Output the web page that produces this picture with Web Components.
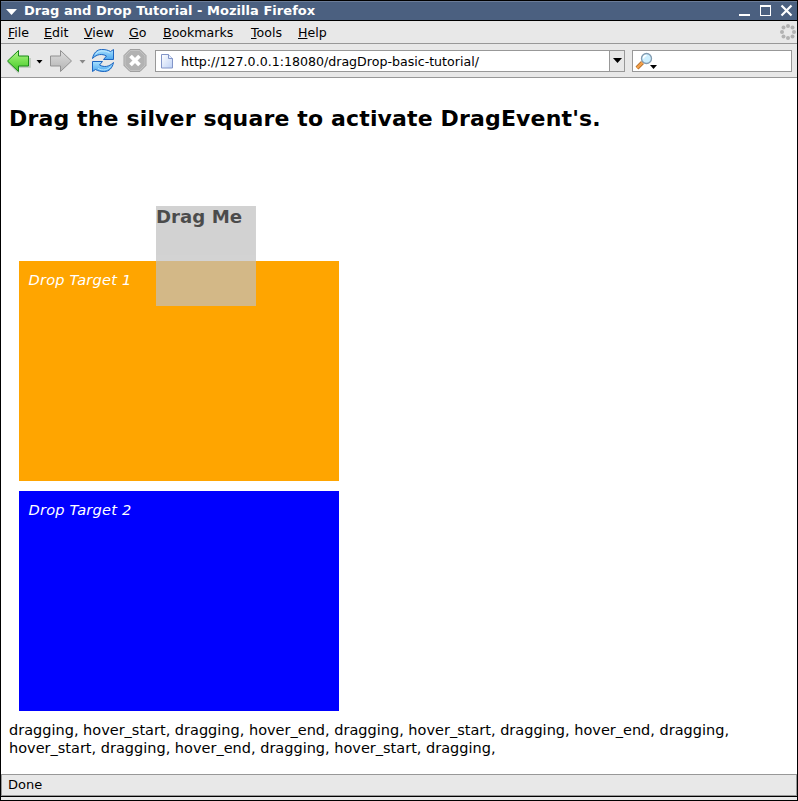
<!DOCTYPE html>
<html lang="en">
<head>
<meta charset="utf-8">
<title>Drag and Drop Tutorial</title>
<style>
html,body{margin:0;height:100%;overflow:hidden;background:#000}
body{font-family:"DejaVu Sans",sans-serif;font-size:13px;color:#000}
</style>
</head>
<body>
<browser-window>
  <title-bar slot="chrome">Drag and Drop Tutorial - Mozilla Firefox</title-bar>
  <menu-bar slot="chrome"></menu-bar>
  <tool-bar slot="chrome">http://127.0.0.1:18080/dragDrop-basic-tutorial/</tool-bar>
  <tutorial-page>
    <span slot="heading">Drag the silver square to activate DragEvent's.</span>
    <drop-target color="orange">Drop Target 1</drop-target>
    <drop-target color="blue">Drop Target 2</drop-target>
    <drag-square slot="drag">Drag Me</drag-square>
    <event-log slot="log">dragging, hover_start, dragging, hover_end, dragging, hover_start, dragging, hover_end, dragging, hover_start, dragging, hover_end, dragging, hover_start, dragging,</event-log>
  </tutorial-page>
  <status-bar slot="status">Done</status-bar>
</browser-window>
<script>
function define(name, html) {
  customElements.define(name, class extends HTMLElement {
    constructor() {
      super();
      this.attachShadow({mode: 'open'}).innerHTML = html;
    }
  });
}

define('browser-window', `<style>
:host{display:flex;flex-direction:column;box-sizing:border-box;width:798px;height:801px;border:1px solid #000;background:#fff}
main{flex:1;min-height:0;display:flex}
footer{height:3px;background:#e8e8e8;border-top:1px solid #000}
</style><slot name="chrome"></slot><main><slot></slot></main><slot name="status"></slot><footer></footer>`);

define('title-bar', `<style>
:host{display:flex;align-items:center;box-sizing:border-box;height:20px;background:#4b6080;border-top:1px solid #6b7c98;border-bottom:1px solid #000;color:#fff;font-weight:bold;font-size:13px;padding-left:5px}
.t{flex:1;margin-left:7px;white-space:nowrap;line-height:18px;letter-spacing:.04px}
svg{display:block}
</style><svg width="11" height="18"><path d="M0 7h11L5.500 13z" fill="#fff"/></svg><span class="t"><slot></slot></span>
<svg width="60" height="18" fill="none" stroke="#fff" shape-rendering="crispEdges"><path d="M2 13h11" stroke-width="2"/><path d="M23.500 4v10M33.500 4v10M23 13.500h11" stroke-width="1"/><path d="M23 4h11" stroke-width="2"/><path d="M44.500 3.500l10 10M54.500 3.500l-10 10" stroke-width="2.200" shape-rendering="auto"/></svg>`);

define('menu-bar', `<style>
:host{display:flex;align-items:center;box-sizing:border-box;height:23px;background:#e8e8e8;border-bottom:1px solid #989898;font-size:12.600px;padding-left:7px}
nav{display:grid;flex:1;grid-template-columns:36px 40px 45px 34px 88px 47px auto;line-height:22px;padding-top:1px}
u{text-underline-offset:1px;text-decoration-thickness:1px}
svg{display:block}
</style><nav><span><u>F</u>ile</span><span><u>E</u>dit</span><span><u>V</u>iew</span><span><u>G</u>o</span><span><u>B</u>ookmarks</span><span><u>T</u>ools</span><span><u>H</u>elp</span></nav>
<svg width="18" height="22" fill="#b2b2b2"><circle cx="9" cy="5" r="2"/><circle cx="13.500" cy="6.500" r="2"/><circle cx="15" cy="11" r="2"/><circle cx="13.500" cy="15.500" r="2"/><circle cx="9" cy="17" r="2"/><circle cx="4.500" cy="15.500" r="2"/><circle cx="3" cy="11" r="2"/><circle cx="4.500" cy="6.500" r="2"/></svg>`);

define('tool-bar', `<style>
:host{display:flex;align-items:flex-start;box-sizing:border-box;height:34px;background:#e8e8e8;border-bottom:1px solid #989898;font-size:12.600px}
svg{display:block}
.icons{width:154px;flex:none}
.url{display:flex;box-sizing:border-box;width:470px;height:22px;margin-top:6px;border:1px solid #989898;background:#fff}
.url span{flex:1;line-height:21px;margin-left:7px;white-space:nowrap}
.dd{width:14px;height:20px;background:#e8e8e8;border-left:1px solid #989898}
.search{box-sizing:border-box;width:160px;height:22px;margin:6px 0 0 7px;border:1px solid #989898;background:#fff}
</style>
<svg class="icons" width="154" height="33" viewBox="1 44 154 33">
<defs><linearGradient id="g" x2="0" y2="1"><stop stop-color="#b6f58e"/><stop offset=".5" stop-color="#77e052"/><stop offset="1" stop-color="#43c829"/></linearGradient>
<linearGradient id="s" x2="0" y2="1"><stop stop-color="#dedede"/><stop offset="1" stop-color="#b3b3b3"/></linearGradient>
<linearGradient id="b" x2="0" y2="1"><stop stop-color="#a8e1ff"/><stop offset="1" stop-color="#4ba7ee"/></linearGradient></defs>
<path d="M8 62L18 72v-5h12V58" fill="none" stroke="#b8c4b6" stroke-width="1.500"/>
<path d="M7.500 61L18.500 50.500v5.500h10v10h-10v5.500z" fill="url(#g)" stroke="#198b17" stroke-linejoin="round"/>
<path d="M36.500 60h6l-3 3.500z"/>
<path d="M71.500 61L60.500 50.500v5.500h-10v10h10v5.500z" fill="url(#s)" stroke="#919191" stroke-linejoin="round"/>
<path d="M79.500 60h6l-3 3.500z" fill="#888"/>
<g fill="url(#b)" stroke="#1c65c0" stroke-linejoin="round"><path d="M92.500 58.500C93.500 53 97 49.500 101.500 49.500C105 49.500 108 50 110.500 51.500L113.500 49.500V59.500H103.500L106.500 56C102 53.500 97 54 92.500 58.500z"/><path d="M113.500 62.500C112.500 68 109 71.500 104.500 71.500C101 71.500 98 71 95.500 69.500L92.500 71.500V61.500H102.500L99.500 65C104 67.500 109 67 113.500 62.500z"/></g>
<path d="M95.500 54.500c3-4.500 9-4.500 14.500-1.500M98 68.500c5 2.500 10 1.500 12.500-2" fill="none" stroke="#bce8ff"/>
<path d="M130 49.500h10l6 6v10l-6 6h-10l-6-6v-10z" fill="#b2b2b2" stroke="#a0a0a0"/><path d="M130.500 50.500h9l5.500 5.500v9l-5.500 5.500h-9l-5.500-5.500v-9z" fill="none" stroke="#c8c8c8" stroke-width=".8"/>
<path d="M130.500 56l9 9M139.500 56l-9 9" stroke="#fff" stroke-width="3.800"/>
</svg>
<div class="url"><svg width="18" height="20"><defs><linearGradient id="p" x2="1" y2="1"><stop stop-color="#fff"/><stop offset="1" stop-color="#bdd1f5"/></linearGradient></defs><path d="M5.500 3.500h7l4 4v9.500h-11z" fill="url(#p)" stroke="#8295c8"/><path d="M12.500 3.500v4h4" fill="#e5eeff" stroke="#8295c8"/></svg><span><slot></slot></span><div class="dd"><svg width="14" height="20"><path d="M3 7h9l-4.500 5z"/></svg></div></div>
<div class="search"><svg width="28" height="20"><path d="M4 17L9.500 11.500" stroke="#a76524" stroke-width="4"/><path d="M4 17L9.500 11.500" stroke="#f2a04b" stroke-width="2.500"/><circle cx="13.500" cy="7.500" r="5" fill="#ccefff" stroke="#829bb0" stroke-width="1.300"/><path d="M10.500 7.500c0-2 1.500-3 3-3" fill="none" stroke="#fff" stroke-width="1.500"/><path d="M17 14h7l-3.500 4z"/></svg></div>`);

define('tutorial-page', `<style>
:host{display:block;position:relative;flex:1;padding:0 8px;font-size:15px}
h2{margin:0;padding-top:27px;height:156px;font-size:22px;letter-spacing:.15px;line-height:27px;white-space:nowrap}
.targets{display:flex;flex-direction:column;gap:10px;padding-left:10px;width:320px}
.log{margin-top:10px}
</style><h2><slot name="heading"></slot></h2><div class="targets"><slot></slot></div><div class="log"><slot name="log"></slot></div><slot name="drag"></slot>`);

customElements.define('drop-target', class extends HTMLElement {
  connectedCallback() {
    this.attachShadow({mode: 'open'}).innerHTML = `<style>
:host{display:block;box-sizing:border-box;height:220px;padding:9px 9.500px;color:#fff;font-style:italic;font-size:14.600px;letter-spacing:.2px;line-height:19px;background:${this.getAttribute('color')}}
</style><slot></slot>`;
  }
});

define('drag-square', `<style>
:host{display:block;position:absolute;left:155px;top:128px;width:100px;height:100px;background:silver;opacity:.7;font-weight:bold;font-size:18.200px;line-height:21px;white-space:nowrap}
</style><slot></slot>`);

define('event-log', `<style>:host{display:block;width:730px;font-size:14.500px;line-height:18px}</style><slot></slot>`);

define('status-bar', `<style>
:host{display:block;box-sizing:border-box;height:22px;background:#e8e8e8;border:1px solid #989898;padding-left:6px;font-size:13px;line-height:20px}
</style><slot></slot>`);
</script>
</body>
</html>
